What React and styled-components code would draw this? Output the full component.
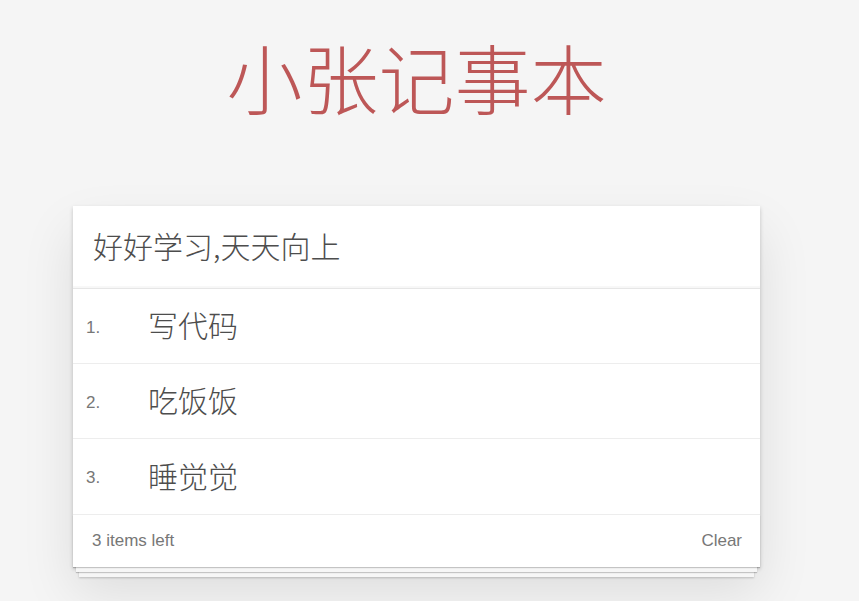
import React from 'react';
import styled, { createGlobalStyle } from 'styled-components';

const GlobalStyle = createGlobalStyle`
  html, body {
    margin: 0;
    padding: 0;
  }
  body {
    background: #f5f5f5;
    font-family: "Liberation Sans", Arial, "Noto Sans CJK SC", sans-serif;
    color: #4d4d4d;
  }
`;

const Page = styled.section`
  box-sizing: border-box;
  min-height: 100vh;
  padding-top: 22px;
  padding-left: 73px;
  width: 859px;
`;

const Column = styled.div`
  width: 687px;
`;

const Title = styled.h1`
  margin: 0 0 76px;
  text-align: center;
  font-family: "Noto Sans CJK SC", sans-serif;
  font-size: 76px;
  font-weight: 300;
  line-height: 108px;
  color: rgba(175, 47, 47, 0.8);
`;

const Card = styled.div`
  background: #fff;
  box-shadow: 0 2px 4px 0 rgba(0, 0, 0, 0.2), 0 25px 50px 0 rgba(0, 0, 0, 0.1);
`;

const NewTodo = styled.input`
  display: block;
  box-sizing: border-box;
  width: 100%;
  height: 83px;
  margin: 0;
  padding: 0 20px 4px;
  border: none;
  outline: none;
  background: transparent;
  font-family: "Noto Sans CJK SC", sans-serif;
  font-size: 30px;
  font-weight: 300;
  color: #4d4d4d;
  box-shadow: inset 0 -2px 1px rgba(0, 0, 0, 0.03);
  border-bottom: 1px solid #e6e6e6;
`;

const List = styled.ul`
  margin: 0;
  padding: 0;
  list-style: none;
`;

const Item = styled.li`
  display: flex;
  align-items: center;
  box-sizing: border-box;
  height: ${p => (p.$last ? 76 : 75)}px;
  border-bottom: 1px solid #ededed;
`;

const Index = styled.span`
  width: 75px;
  padding-left: 13px;
  padding-top: 3px;
  box-sizing: border-box;
  font-size: 17px;
  color: #777;
`;

const Label = styled.label`
  padding-bottom: 4px;
  font-family: "Noto Sans CJK SC", sans-serif;
  font-size: 30px;
  font-weight: 300;
  color: #4d4d4d;
`;

const Footer = styled.footer`
  display: flex;
  justify-content: space-between;
  align-items: center;
  height: 52px;
  padding: 0 18px 0 19px;
  font-size: 17px;
  color: #777;
  box-shadow: 0 1px 1px rgba(0, 0, 0, 0.2),
    0 8px 0 -3px #f6f6f6,
    0 9px 1px -3px rgba(0, 0, 0, 0.2),
    0 16px 0 -6px #f6f6f6,
    0 17px 2px -6px rgba(0, 0, 0, 0.2);
`;

const ClearButton = styled.button`
  margin: 0;
  padding: 0;
  border: none;
  background: none;
  font: inherit;
  color: #777;
  cursor: pointer;
`;

const todos = ['写代码', '吃饭饭', '睡觉觉'];

export default function App() {
  return (
    <>
      <GlobalStyle />
      <Page>
        <Column>
          <Title>小张记事本</Title>
          <Card>
            <NewTodo defaultValue="好好学习,天天向上" />
            <List>
              {todos.map((t, i) => (
                <Item key={t} $last={i === todos.length - 1}>
                  <Index>{i + 1}.</Index>
                  <Label>{t}</Label>
                </Item>
              ))}
            </List>
            <Footer>
              <span>{todos.length} items left</span>
              <ClearButton>Clear</ClearButton>
            </Footer>
          </Card>
        </Column>
      </Page>
    </>
  );
}
